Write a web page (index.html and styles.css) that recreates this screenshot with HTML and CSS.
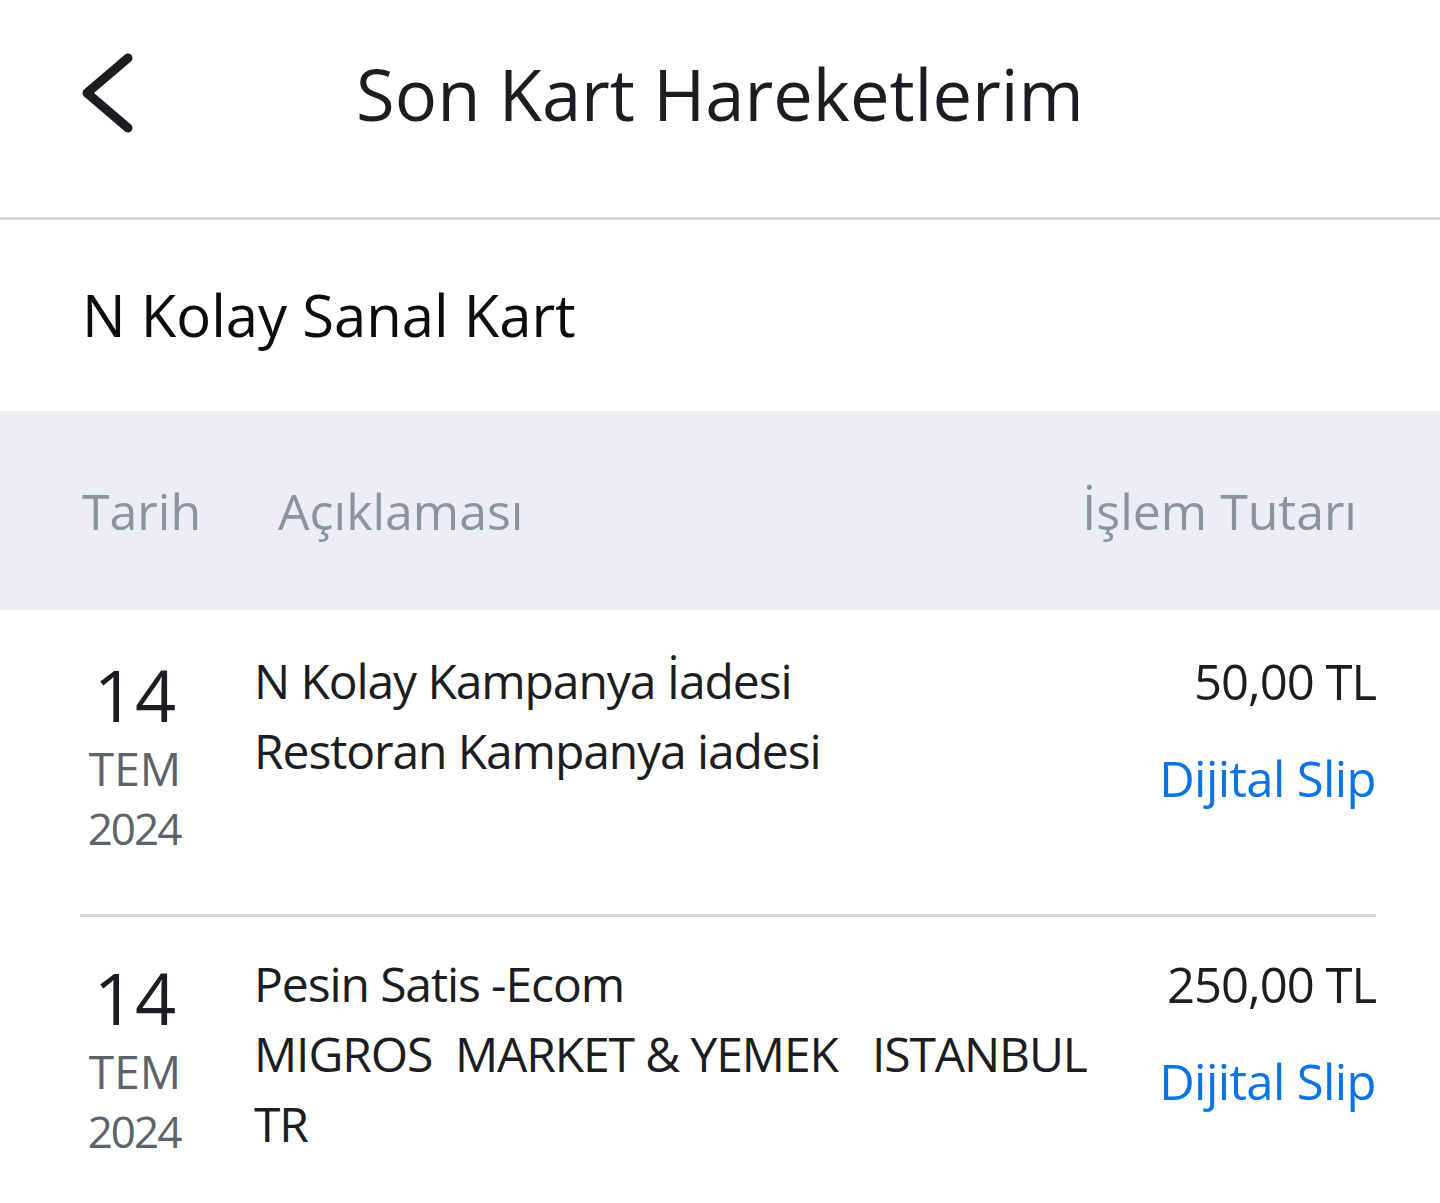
FILE: index.html
```html
<!DOCTYPE html>
<html lang="tr">
<head>
<meta charset="utf-8">
<title>Son Kart Hareketlerim</title>
<link rel="stylesheet" href="styles.css">
</head>
<body>
<header class="topbar">
  <button class="back" aria-label="Geri">
    <svg width="60" height="90" viewBox="0 0 60 90"><polyline points="48,8 7,43 48,78" fill="none" stroke="#1b1d20" stroke-width="9" stroke-linecap="round" stroke-linejoin="round"/></svg>
  </button>
  <h1 class="title">Son Kart Hareketlerim</h1>
</header>
<section class="card-name">N Kolay Sanal Kart</section>
<div class="table-head">
  <span class="th-date">Tarih</span>
  <span class="th-desc">Açıklaması</span>
  <span class="th-amount">İşlem Tutarı</span>
</div>
<div class="list">
  <div class="row">
    <div class="date">
      <div class="day">14</div>
      <div class="month">TEM</div>
      <div class="year">2024</div>
    </div>
    <div class="desc">
      <div>N Kolay Kampanya İadesi</div>
      <div>Restoran Kampanya iadesi</div>
    </div>
    <div class="amount">
      <div class="sum">50,00 TL</div>
      <a class="slip">Dijital Slip</a>
    </div>
  </div>
  <div class="row">
    <div class="date">
      <div class="day">14</div>
      <div class="month">TEM</div>
      <div class="year">2024</div>
    </div>
    <div class="desc">
      <div>Pesin Satis -Ecom</div>
      <div>MIGROS&nbsp; MARKET &amp; YEMEK &nbsp; ISTANBUL</div>
      <div>TR</div>
    </div>
    <div class="amount">
      <div class="sum">250,00 TL</div>
      <a class="slip">Dijital Slip</a>
    </div>
  </div>
</div>
</body>
</html>
```
FILE: styles.css
```css
* { box-sizing: border-box; }
html, body { margin: 0; padding: 0; background: #ffffff; }
body {
  width: 1440px;
  height: 1203px;
  overflow: hidden;
  font-family: "Open Sans", "Noto Sans", sans-serif;
  color: #1b1d20;
}
.topbar {
  position: relative;
  height: 220px;
  border-bottom: 3px solid #d3d7dc;
  display: flex;
  align-items: center;
  justify-content: center;
}
.back {
  position: absolute;
  left: 80px;
  top: 50px;
  width: 60px;
  height: 90px;
  padding: 0;
  border: 0;
  background: none;
}
.back svg { display: block; }
.title {
  margin: 0;
  margin-top: -30px;
  font-size: 70.5px;
  font-weight: 400;
}
.card-name {
  height: 191px;
  padding: 55px 0 0 82px;
  font-size: 58px;
  line-height: 80px;
  color: #0b0c0d;
}
.table-head {
  height: 199px;
  background: #eceef3;
  display: flex;
  align-items: center;
  padding: 0 83px 0 82px;
  font-size: 50px;
  color: #8b949c;
}
.th-date { width: 196px; }
.th-desc { flex: 1; }
.list {
  margin: 0 64px 0 80px;
}
.row {
  display: flex;
  border-bottom: 3px solid #d3d7dc;
  padding: 32px 0 56px;
}
.row + .row { padding-top: 28px; }
.row:last-child { border-bottom: 0; }
.date {
  width: 110px;
  text-align: center;
  flex: none;
  padding-top: 7px;
}
.day {
  font-size: 72px;
  line-height: 90px;
  color: #1b1d20;
}
.month {
  font-size: 46px;
  line-height: 59px;
  color: #5d636a;
}
.year {
  font-size: 44px;
  line-height: 60px;
  letter-spacing: -2px;
  text-indent: -2px;
  color: #5d636a;
}
.desc {
  flex: 1;
  margin-left: 64px;
  font-size: 48px;
  line-height: 70px;
  letter-spacing: -1.1px;
  padding-top: 4px;
}
.amount {
  text-align: right;
  font-size: 49px;
  padding-top: 4px;
}
.sum { line-height: 70px; letter-spacing: -1px; }
.slip {
  display: block;
  margin-top: 27px;
  line-height: 70px;
  letter-spacing: -0.6px;
  color: #0a74e2;
}
```
